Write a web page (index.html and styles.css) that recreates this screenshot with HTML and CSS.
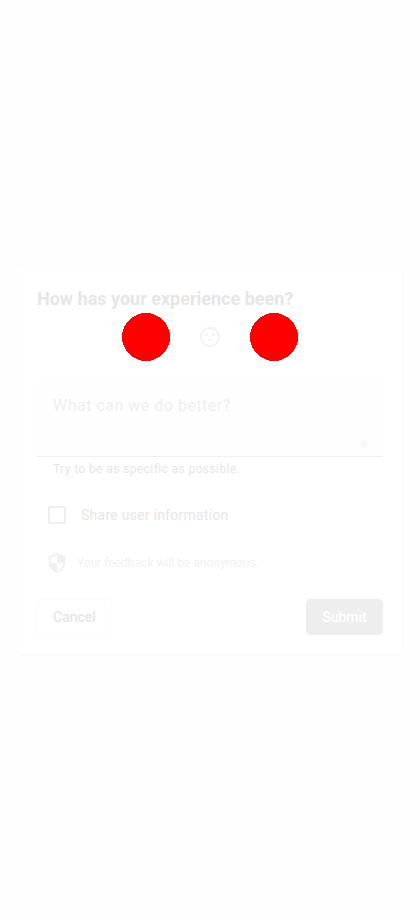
FILE: index.html
```html
<!DOCTYPE html>
<html lang="en">
<head>
<meta charset="utf-8">
<title>Feedback</title>
<link rel="stylesheet" href="styles.css">
</head>
<body>
<form class="card">
  <h1 class="title">How has your experience been?</h1>
  <div class="ratings">
    <svg class="dot" viewBox="0 0 48 48"><circle cx="24" cy="24" r="24"/></svg>
    <svg class="face" viewBox="0 0 24 24"><path d="M9 14h6v1.5H9z"/><circle cx="15.5" cy="9.5" r="1.5"/><circle cx="8.5" cy="9.5" r="1.5"/><path d="M11.99 2C6.47 2 2 6.48 2 12s4.47 10 9.99 10C17.52 22 22 17.52 22 12S17.52 2 11.99 2zM12 20c-4.42 0-8-3.58-8-8s3.58-8 8-8 8 3.58 8 8-3.58 8-8 8z"/></svg>
    <svg class="dot" viewBox="0 0 48 48"><circle cx="24" cy="24" r="24"/></svg>
  </div>
  <div class="field">
    <span class="label">What can we do better?</span>
    <svg class="grip" viewBox="0 0 8 8"><path d="M.5 7.5l7-7M4.5 7.5l3-3"/></svg>
  </div>
  <p class="hint">Try to be as specific as possible.</p>
  <label class="check"><span class="box"></span><span>Share user information</span></label>
  <div class="privacy">
    <svg viewBox="0 0 24 24"><path d="M12 1L3 5v6c0 5.55 3.84 10.74 9 12 5.16-1.26 9-6.45 9-12V5l-9-4zm0 10.99h7c-.53 4.12-3.28 7.79-7 8.94V12H5V6.3l7-3.11v8.8z"/></svg>
    <span>Your feedback will be anonymous.</span>
  </div>
  <div class="actions">
    <button type="button" class="btn cancel">Cancel</button>
    <button type="button" class="btn submit">Submit</button>
  </div>
</form>
</body>
</html>
```
FILE: styles.css
```css
* { box-sizing: border-box; }
body {
  margin: 0;
  height: 920px;
  display: flex;
  align-items: center;
  justify-content: center;
  background: #fefefe;
  font-family: Roboto, sans-serif;
  color: #e6e6e6;
}
.card {
  width: 386px;
  height: 390px;
  padding: 19px;
  border: 1px solid #fcfcfc;
  border-radius: 5px;
  background: #fff;
  box-shadow: 0 1px 1px #fcfcfc;
  display: flex;
  flex-direction: column;
}
.title {
  margin: 0;
  font-size: 18px;
  line-height: 28px;
  font-weight: 700;
}
.ratings {
  height: 48px;
  display: flex;
  justify-content: center;
  align-items: center;
  gap: 28px;
}
.dot { width: 48px; height: 48px; fill: #f00; shape-rendering: crispEdges; }
.face { width: 24px; height: 24px; margin-bottom: 1px; fill: #f3f3f3; }
.field {
  margin-top: 17px;
  height: 79px;
  padding: 16px;
  display: flex;
  justify-content: space-between;
  background: #fefefe;
  border-bottom: 1px solid #f0f0f0;
  border-radius: 4px 4px 0 0;
}
.label { font-size: 16px; line-height: 24px; letter-spacing: .5px; color: #efefef; }
.grip { width: 8px; height: 8px; align-self: flex-end; margin-bottom: -8px; fill: none; stroke: #e3e3e3; stroke-width: .7; }
.hint { margin: 2px 0 0 16px; font-size: 12px; line-height: 20px; letter-spacing: .4px; }
.check {
  margin: 26px 0 0 11px;
  height: 20px;
  display: flex;
  align-items: center;
  gap: 15px;
  font-size: 14px;
  letter-spacing: .25px;
}
.box { width: 18px; height: 18px; border: 2px solid #efefef; border-radius: 2px; }
.privacy {
  margin: 26px 0 0 9px;
  height: 24px;
  display: flex;
  align-items: center;
  gap: 9px;
  font-size: 12px;
  color: #f1f1f1;
}
.privacy svg { width: 22px; height: 22px; fill: #f0f0f0; }
.actions { margin-top: auto; display: flex; justify-content: space-between; }
.btn {
  height: 36px;
  padding: 0 15px;
  border: 1px solid #fbfbfb;
  border-radius: 4px;
  font: 500 14px/34px Roboto, sans-serif;
}
.cancel { width: 75px; background: #fff; color: #e6e6e6; }
.submit { width: 77px; background: #eee; border-color: #eee; color: #fff; }
```
